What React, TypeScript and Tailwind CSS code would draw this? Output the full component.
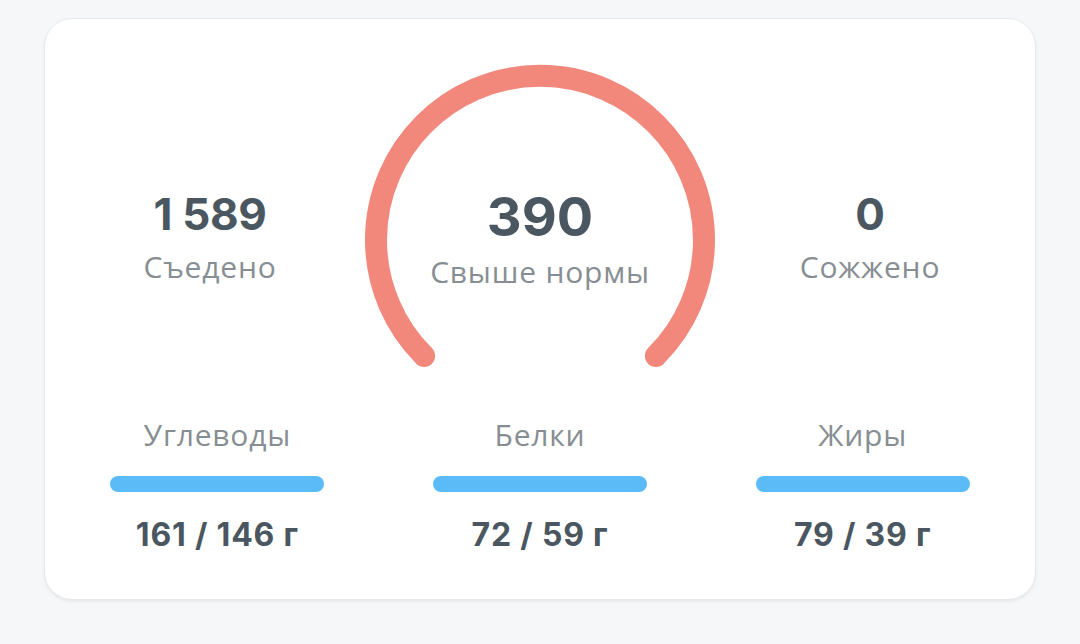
import React from "react";

const num = { fontFamily: "Inter, 'Open Sans', sans-serif" } as React.CSSProperties;
const lab = { fontFamily: "'Open Sans', Roboto, sans-serif" } as React.CSSProperties;

function Side({ value, label }: { value: string; label: string }) {
  return (
    <div className="flex flex-col items-center pt-[135px]">
      <div style={num} className="text-[44px] leading-none font-bold text-[#4a5761] tracking-[-0.3px]">
        {value}
      </div>
      <div style={lab} className="mt-[16px] text-[30px] leading-none text-[#878e93] tracking-[0.8px]">
        {label}
      </div>
    </div>
  );
}

function Macro({ label, value }: { label: string; value: string }) {
  return (
    <div className="flex flex-col items-center">
      <div style={lab} className="text-[30px] leading-none text-[#878e93] tracking-[0.8px]">
        {label}
      </div>
      <div className="mt-[26px] h-4 w-[214px] rounded-full bg-[#5abbf7]" />
      <div style={num} className="mt-[27px] text-[32px] leading-none font-bold text-[#4a5761] tracking-[0.8px]">
        {value}
      </div>
    </div>
  );
}

export default function App() {
  return (
    <div className="min-h-[644px] w-[1080px] bg-[#f5f7f9] pt-[18px] px-[44px]">
      <div className="h-[582px] rounded-[28px] bg-white border border-[#e6e9ec] shadow-[0_2px_3px_rgba(0,0,0,0.06)] pt-[38px]">
        <div className="grid grid-cols-3">
          <Side value="1 589" label="Съедено" />
          <div className="relative flex justify-center">
            <svg width="360" height="312" viewBox="0 0 360 312" className="shrink-0">
              <path
                d="M 64.1 298.9 A 164 164 0 1 1 295.9 298.9"
                fill="none"
                stroke="#f2887b"
                strokeWidth="22"
                strokeLinecap="round"
              />
            </svg>
            <div className="absolute inset-x-0 top-[133px] flex flex-col items-center">
              <div style={num} className="text-[54px] leading-none font-bold text-[#4a5761]">
                390
              </div>
              <div style={lab} className="mt-[13px] text-[30px] leading-none text-[#878e93] tracking-[0.8px]">
                Свыше нормы
              </div>
            </div>
          </div>
          <Side value="0" label="Сожжено" />
        </div>
        <div className="grid grid-cols-3 px-[11px] mt-[51px]">
          <Macro label="Углеводы" value="161 / 146 г" />
          <Macro label="Белки" value="72 / 59 г" />
          <Macro label="Жиры" value="79 / 39 г" />
        </div>
      </div>
    </div>
  );
}
